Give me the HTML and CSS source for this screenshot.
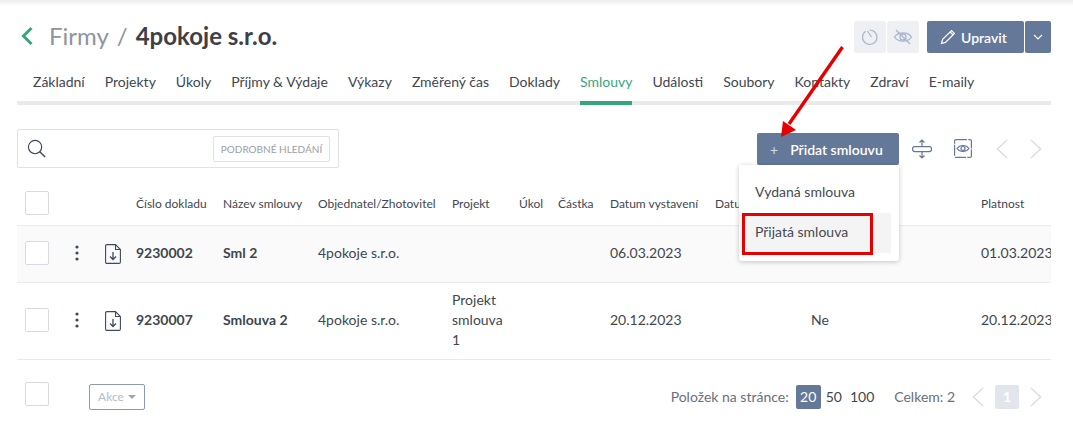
FILE: index.html
```html
<!DOCTYPE html>
<html lang="cs">
  <head>
    <meta charset="UTF-8" />
    <title>4pokoje s.r.o.</title>
    <link rel="stylesheet" href="styles.css">
  </head>

  <body>
    <div class="page">
      <header class="title-row">
        <h1 class="title">
          <svg class="back" width="14" height="20" viewBox="0 0 14 20"><path d="M11.5 2 L3.5 10 L11.5 18" fill="none" stroke="#37a67e" stroke-width="3"/></svg>
          <span class="crumb">Firmy</span>
          <span class="crumb slash">/</span>
          <span>4pokoje s.r.o.</span>
        </h1>
        <div class="title-actions">
          <button class="ghost-btn">
            <svg width="18" height="18" viewBox="0 0 18 18" fill="none" stroke="#a9b6cc" stroke-width="1.2"><path d="M8.5 2 A7.2 7.2 0 1 1 4.6 3.3"/><path d="M6.4 3 L10.5 9"/></svg>
          </button>
          <button class="ghost-btn">
            <svg width="20" height="18" viewBox="0 0 20 18" fill="none" stroke="#a9b6cc" stroke-width="1.3"><path d="M1.5 9 C5 3.5 15 3.5 18.5 9 C15 14.5 5 14.5 1.5 9 Z"/><circle cx="10" cy="9" r="3"/><path d="M3 2 L17 16"/></svg>
          </button>
          <div class="edit-group">
            <button class="primary-btn edit-btn">
              <svg width="16" height="16" viewBox="0 0 16 16" fill="none" stroke="#fff" stroke-width="1.2"><path d="M1.5 14.5 L2.6 10.4 L11.6 1.6 L14.4 4.4 L5.5 13.4 Z M10.2 3 L13 5.8"/></svg>
              Upravit
            </button>
            <button class="primary-btn caret-btn">
              <svg width="10" height="6" viewBox="0 0 10 6" fill="none" stroke="#fff" stroke-width="1.1"><path d="M1 1 L5 5 L9 1"/></svg>
            </button>
          </div>
        </div>
      </header>

      <nav class="tabs">
        <a>Základní</a>
        <a>Projekty</a>
        <a>Úkoly</a>
        <a>Příjmy &amp; Výdaje</a>
        <a>Výkazy</a>
        <a>Změřený čas</a>
        <a>Doklady</a>
        <a class="active">Smlouvy</a>
        <a>Události</a>
        <a>Soubory</a>
        <a>Kontakty</a>
        <a>Zdraví</a>
        <a>E-maily</a>
      </nav>

      <section class="toolbar">
        <div class="search">
          <svg width="19" height="19" viewBox="0 0 20 20" fill="none" stroke="#3d4a5c" stroke-width="1.2"><circle cx="8.5" cy="8.5" r="7"/><path d="M13.5 13.5 L19 19" stroke-width="1.5"/></svg>
          <button class="search-more">PODROBNÉ HLEDÁNÍ</button>
        </div>
        <div class="tools">
          <div class="add-wrap">
            <button class="primary-btn add-btn"><span class="plus">+</span>Přidat smlouvu</button>
            <div class="add-menu">
              <div class="menu-item">Vydaná smlouva</div>
              <div class="menu-item hover">Přijatá smlouva</div>
              <div class="red-box"></div>
            </div>
          </div>
          <svg class="tool-icon" width="20" height="20" viewBox="0 0 20 20" fill="none" stroke="#64789a" stroke-width="1.2"><rect x="0.6" y="7.6" width="18.8" height="5" rx="2"/><path d="M10 7.6 V1 M7.5 3.5 L10 1 L12.5 3.5 M10 12.6 V19 M7.5 16.5 L10 19 L12.5 16.5"/></svg>
          <svg class="tool-icon" width="18" height="19" viewBox="0 0 18 19" fill="none" stroke="#64789a" stroke-width="1.2"><rect x="0.6" y="0.6" width="16.8" height="17.8" rx="1.5" stroke-dasharray="11 1.2"/><path d="M3 9.5 C6 5.5 12 5.5 15 9.5 C12 13.5 6 13.5 3 9.5 Z"/><circle cx="9" cy="9.5" r="2"/></svg>
          <div class="pager-arrows">
            <svg width="12" height="20" viewBox="0 0 12 20" fill="none" stroke="#dcdfe3" stroke-width="1.6"><path d="M11 1 L1.5 10 L11 19"/></svg>
            <svg width="12" height="20" viewBox="0 0 12 20" fill="none" stroke="#dcdfe3" stroke-width="1.6"><path d="M1 1 L10.5 10 L1 19"/></svg>
          </div>
        </div>
      </section>

      <div class="table-wrap">
        <table class="grid">
          <colgroup>
            <col class="c-check"><col class="c-dots"><col class="c-file"><col class="c-num"><col class="c-name"><col class="c-firm"><col class="c-proj"><col class="c-task"><col class="c-sum"><col class="c-date"><col class="c-date2"><col class="c-sign"><col class="c-valid">
          </colgroup>
          <thead>
            <tr>
              <th><span class="check"></span></th>
              <th></th>
              <th></th>
              <th>Číslo dokladu</th>
              <th>Název smlouvy</th>
              <th>Objednatel/Zhotovitel</th>
              <th>Projekt</th>
              <th>Úkol</th>
              <th>Částka</th>
              <th>Datum vystavení</th>
              <th>Datum účinnosti</th>
              <th>Podepsáno</th>
              <th>Platnost</th>
            </tr>
          </thead>
          <tbody>
            <tr class="shaded row-a">
              <td><span class="check"></span></td>
              <td>
                <svg class="dots" width="4" height="16" viewBox="0 0 4 16" fill="#3d4a5c"><circle cx="2" cy="2" r="1.6"/><circle cx="2" cy="8" r="1.6"/><circle cx="2" cy="14" r="1.6"/></svg>
              </td>
              <td>
                <svg class="file" width="16" height="20" viewBox="0 0 16 20" fill="none" stroke="#3d4a5c" stroke-width="1.1"><path d="M0.6 2 Q0.6 0.6 2 0.6 H10.5 L15.4 5.5 V18 Q15.4 19.4 14 19.4 H2 Q0.6 19.4 0.6 18 Z M10.5 0.6 V5.5 H15.4"/><path d="M8 8 V15.5 M5 12.5 L8 15.5 L11 12.5" stroke-width="1.3"/></svg>
              </td>
              <td class="strong">9230002</td>
              <td class="strong">Sml 2</td>
              <td>4pokoje s.r.o.</td>
              <td></td>
              <td></td>
              <td></td>
              <td>06.03.2023</td>
              <td></td>
              <td>Ne</td>
              <td>01.03.2023</td>
            </tr>
            <tr class="row-b">
              <td><span class="check"></span></td>
              <td>
                <svg class="dots" width="4" height="16" viewBox="0 0 4 16" fill="#3d4a5c"><circle cx="2" cy="2" r="1.6"/><circle cx="2" cy="8" r="1.6"/><circle cx="2" cy="14" r="1.6"/></svg>
              </td>
              <td>
                <svg class="file" width="16" height="20" viewBox="0 0 16 20" fill="none" stroke="#3d4a5c" stroke-width="1.1"><path d="M0.6 2 Q0.6 0.6 2 0.6 H10.5 L15.4 5.5 V18 Q15.4 19.4 14 19.4 H2 Q0.6 19.4 0.6 18 Z M10.5 0.6 V5.5 H15.4"/><path d="M8 8 V15.5 M5 12.5 L8 15.5 L11 12.5" stroke-width="1.3"/></svg>
              </td>
              <td class="strong">9230007</td>
              <td class="strong">Smlouva 2</td>
              <td>4pokoje s.r.o.</td>
              <td>Projekt smlouva 1</td>
              <td></td>
              <td></td>
              <td>20.12.2023</td>
              <td></td>
              <td>Ne</td>
              <td>20.12.2023</td>
            </tr>
          </tbody>
        </table>
      </div>

      <footer class="table-foot">
        <div class="foot-left">
          <span class="check"></span>
          <button class="akce">Akce <i class="akce-caret"></i></button>
        </div>
        <div class="foot-right">
          <span class="per-label">Položek na stránce:</span>
          <span class="per on">20</span>
          <span class="per">50</span>
          <span class="per">100</span>
          <span class="total">Celkem: 2</span>
          <svg width="12" height="20" viewBox="0 0 12 20" fill="none" stroke="#dcdfe3" stroke-width="1.6"><path d="M11 1 L1.5 10 L11 19"/></svg>
          <span class="page-num">1</span>
          <svg width="12" height="20" viewBox="0 0 12 20" fill="none" stroke="#dcdfe3" stroke-width="1.6"><path d="M1 1 L10.5 10 L1 19"/></svg>
        </div>
      </footer>

      <svg class="red-arrow" width="70" height="96" viewBox="0 0 70 96">
        <path d="M66.5 3 L13 80" stroke="#e60000" stroke-width="3.4" fill="none"/>
        <path d="M5 93 L7 77 L20 86 Z" fill="#e60000"/>
      </svg>
    </div>
  </body>
</html>
```

FILE: styles.css
```css
* {
  box-sizing: border-box;
}

html,
body {
  margin: 0;
  height: 100%;
}

body {
  font-family: "Lato", "Liberation Sans", sans-serif;
  font-size: 14px;
  color: #3f4650;
  background: linear-gradient(to bottom, #ececee, #ffffff 6px);
  overflow: hidden;
}

button {
  font-family: inherit;
  border: none;
  padding: 0;
}

.page {
  position: relative;
  padding: 21px 22px 0 17px;
}

.title-row {
  display: flex;
  justify-content: space-between;
  height: 32px;
}

.title {
  display: flex;
  align-items: center;
  height: 29px;
  margin: 0;
  padding-left: 3px;
  font-size: 24px;
  font-weight: 700;
  color: #3f4045;
}

.back {
  margin-right: 15px;
}

.crumb {
  font-weight: 400;
  color: #8f949e;
}

.slash {
  margin: 0 8px;
}

.title-actions {
  display: flex;
}

.ghost-btn {
  display: flex;
  align-items: center;
  justify-content: center;
  width: 32px;
  height: 32px;
  margin-right: 1px;
  background: #eef0f4;
  border-radius: 2px;
}

.edit-group {
  display: flex;
  gap: 1px;
  margin-left: 7px;
}

.primary-btn {
  display: flex;
  align-items: center;
  height: 32px;
  color: #fff;
  background: #64789a;
  border-radius: 2px;
  font-size: 14px;
  font-weight: 600;
}

.edit-btn {
  width: 97px;
  gap: 5px;
  padding-left: 13px;
}

.caret-btn {
  width: 26px;
  justify-content: center;
}

.tabs {
  display: flex;
  gap: 20px;
  margin-top: 12px;
  padding-left: 16px;
  height: 40px;
  line-height: 34px;
  border-bottom: 4px solid #e9eaec;
}

.tabs a {
  height: 40px;
  white-space: nowrap;
}

.tabs a.active {
  color: #37a67e;
  border-bottom: 4px solid #37a67e;
}

.toolbar {
  display: flex;
  justify-content: space-between;
  margin-top: 24px;
  height: 39px;
}

.search {
  display: flex;
  align-items: center;
  justify-content: space-between;
  width: 322px;
  height: 39px;
  padding: 0 8px 0 9px;
  border: 1px solid #dfe1e4;
  border-radius: 2px;
}

.search-more {
  width: 117px;
  height: 26px;
  color: #9b9ea6;
  background: #fff;
  border: 1px solid #dfe1e4;
  border-radius: 2px;
  font-size: 10px;
}

.tools {
  display: flex;
  align-items: flex-start;
  padding-top: 4px;
}

.add-wrap {
  position: relative;
  width: 142px;
}

.add-btn {
  width: 142px;
  padding-left: 13px;
}

.plus {
  margin-right: 12px;
  font-weight: 400;
  color: #d5dbe5;
}

.add-menu {
  position: absolute;
  z-index: 5;
  top: 32px;
  right: 0;
  width: 160px;
  height: 96px;
  padding-top: 8px;
  background: #fff;
  border-radius: 0 0 3px 3px;
  box-shadow: 0 1px 5px rgba(0, 0, 0, 0.22);
}

.menu-item {
  height: 40px;
  line-height: 38px;
  margin-right: 8px;
  padding-left: 16px;
  color: #454a52;
}

.menu-item.hover {
  background: #f4f4f5;
}

.red-box {
  position: absolute;
  left: 3px;
  top: 48px;
  width: 131px;
  height: 42px;
  border: 3px solid #e60000;
}

.tool-icon {
  margin-left: 13px;
  margin-top: 6px;
}

.tool-icon + .tool-icon {
  margin-left: 22px;
  margin-top: 6px;
}

.pager-arrows {
  display: flex;
  gap: 22px;
  margin-left: 24px;
  margin-right: 9px;
  margin-top: 6px;
}

.table-wrap {
  overflow: hidden;
  margin-top: 14px;
}

.grid {
  table-layout: fixed;
  width: 1056px;
  border-collapse: collapse;
}

.c-check { width: 50px; }
.c-dots { width: 29px; }
.c-file { width: 32px; }
.c-num { width: 87px; }
.c-name { width: 95px; }
.c-firm { width: 134px; }
.c-proj { width: 67px; }
.c-task { width: 39px; }
.c-sum { width: 52px; }
.c-date { width: 105px; }
.c-date2 { width: 96px; }
.c-sign { width: 170px; }
.c-valid { width: 100px; }

.grid th {
  height: 43px;
  padding: 0 0 0 8px;
  font-size: 12px;
  font-weight: 400;
  text-align: left;
  white-space: nowrap;
  border-bottom: 1px solid #e9eaec;
}

.grid td {
  padding: 0 0 1px 8px;
  font-size: 14px;
  line-height: 20px;
  border-bottom: 1px solid #e9eaec;
}

.row-a {
  height: 57px;
}

.row-b {
  height: 77px;
}

.shaded td {
  background: #fafafa;
}

.grid td.strong {
  font-weight: 700;
}

.dots {
  display: block;
}

.file {
  display: block;
  margin: 1px 0 0 1px;
}

.check {
  display: block;
  width: 24px;
  height: 24px;
  background: #fff;
  border: 1px solid #d5dae4;
  border-radius: 2px;
}

.table-foot {
  display: flex;
  justify-content: space-between;
  align-items: flex-start;
  padding: 22px 9px 0 8px;
}

.foot-left {
  display: flex;
  gap: 40px;
}

.akce {
  display: flex;
  align-items: center;
  justify-content: center;
  gap: 4px;
  width: 56px;
  height: 26px;
  margin-top: 2px;
  color: #b4bccb;
  background: #fff;
  border: 1px solid #8b9bb5;
  border-radius: 2px;
  font-size: 12px;
}

.akce-caret {
  border: 4px solid transparent;
  border-top-color: #9aa5b8;
  border-bottom-width: 0;
}

.foot-right {
  display: flex;
  align-items: center;
  height: 24px;
  margin-top: 3px;
  color: #6a6f78;
}

.per-label {
  margin-right: 7px;
}

.per {
  padding: 0 4px;
  color: #3f4650;
}

.per.on {
  width: 25px;
  height: 24px;
  margin-right: 1px;
  padding: 0;
  line-height: 24px;
  text-align: center;
  color: #fff;
  background: #64789a;
  border-radius: 2px;
}

.total {
  margin-left: 16px;
  margin-right: 17px;
}

.page-num {
  width: 24px;
  height: 24px;
  margin: 0 11px;
  line-height: 24px;
  text-align: center;
  font-weight: 700;
  color: #fff;
  background: #e2e5ec;
  border-radius: 2px;
}

.red-arrow {
  position: absolute;
  z-index: 10;
  left: 776px;
  top: 44px;
}
```
